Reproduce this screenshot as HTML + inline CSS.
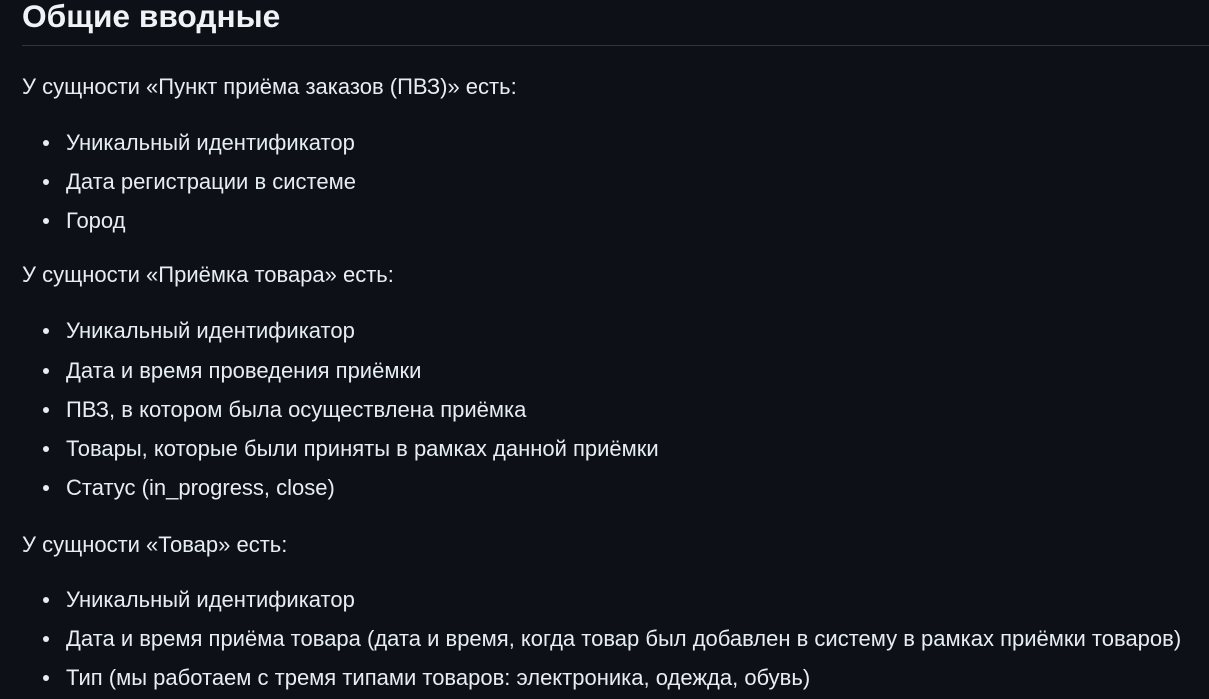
<!DOCTYPE html>
<html><head><meta charset="utf-8"><style>
html,body{margin:0;padding:0;background:#0d1117;width:1209px;height:699px;overflow:hidden}
body{position:relative;font-family:"Liberation Sans","Noto Sans CJK SC",sans-serif;color:#e6edf3}
.h{position:absolute;left:22px;top:-4px;font-size:31.7px;font-weight:bold;line-height:40px;color:#f0f3f6}
.hr{position:absolute;left:22px;right:0;top:45px;height:1px;background:#30363d}
.l{position:absolute;font-size:22px;line-height:26px;white-space:nowrap}
.p{left:22px}
.i{left:66px}
.i::before{content:"";position:absolute;left:-23px;top:10px;width:6px;height:6px;border-radius:50%;background:#e6edf3}
</style></head><body>
<div class="h">Общие вводные</div>
<div class="hr"></div>
<div class="l p" style="top:74px">У сущности «Пункт приёма заказов (ПВЗ)» есть:</div>
<div class="l i" style="top:130px">Уникальный идентификатор</div>
<div class="l i" style="top:169px">Дата регистрации в системе</div>
<div class="l i" style="top:208px">Город</div>
<div class="l p" style="top:262px">У сущности «Приёмка товара» есть:</div>
<div class="l i" style="top:318px">Уникальный идентификатор</div>
<div class="l i" style="top:358px">Дата и время проведения приёмки</div>
<div class="l i" style="top:397px">ПВЗ, в котором была осуществлена приёмка</div>
<div class="l i" style="top:436px">Товары, которые были приняты в рамках данной приёмки</div>
<div class="l i" style="top:475px">Статус (in_progress, close)</div>
<div class="l p" style="top:532px">У сущности «Товар» есть:</div>
<div class="l i" style="top:587px">Уникальный идентификатор</div>
<div class="l i" style="top:626px">Дата и время приёма товара (дата и время, когда товар был добавлен в систему в рамках приёмки товаров)</div>
<div class="l i" style="top:665px">Тип (мы работаем с тремя типами товаров: электроника, одежда, обувь)</div>
</body></html>
